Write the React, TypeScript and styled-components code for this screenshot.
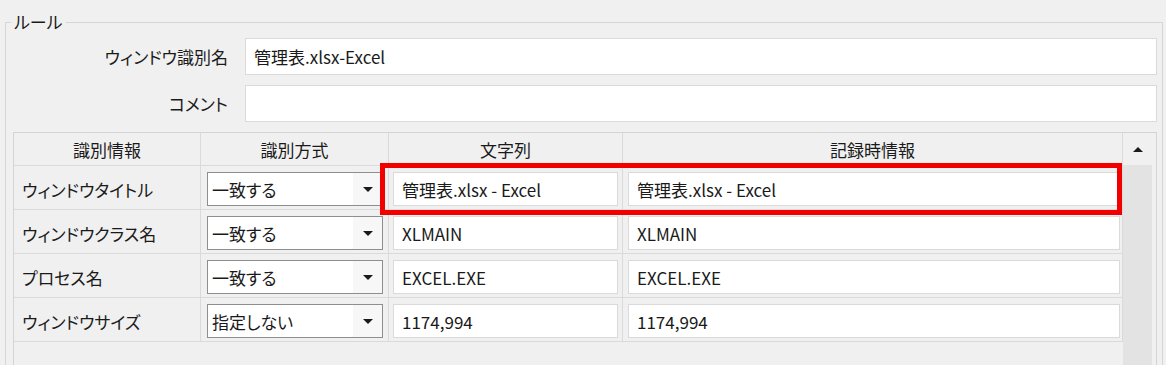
import React from "react";
import styled, { createGlobalStyle } from "styled-components";

const Global = createGlobalStyle`
  html, body { margin: 0; padding: 0; background: #f0f0f0; }
  body { font-family: "Noto Sans CJK JP", "Noto Sans", sans-serif; }
`;

const Window = styled.div`
  width: 1166px;
  height: 365px;
  overflow: hidden;
  box-sizing: border-box;
  padding-top: 22px;
  background: #f0f0f0;
  font-family: "Noto Sans CJK JP", "Noto Sans", sans-serif;
  font-size: 17px;
  font-feature-settings: "palt";
  color: #1a1a1a;
`;

const GroupBox = styled.section`
  position: relative;
  margin-left: 5px;
  width: 1158px;
  height: 420px;
  box-sizing: border-box;
  border: 1px solid #d6d6d6;
  border-bottom: none;
  padding: 15px 5px 0 7px;
`;

const Legend = styled.span`
  position: absolute;
  top: -13px;
  left: 5px;
  padding: 0 3px;
  line-height: 24px;
  background: #f0f0f0;
`;

const FormGrid = styled.div`
  display: grid;
  grid-template-columns: 215px 1fr;
  column-gap: 17px;
  row-gap: 10px;
  align-items: center;
`;

const FieldLabel = styled.label`
  text-align: right;
  white-space: nowrap;
`;

const TextBox = styled.div<{ $h?: number; $pad?: number }>`
  height: ${(p) => p.$h ?? 37}px;
  box-sizing: border-box;
  display: flex;
  align-items: center;
  padding: 0 ${(p) => p.$pad ?? 8}px;
  background: #ffffff;
  border: 1px solid #dadada;
  white-space: nowrap;
  overflow: hidden;
`;

const Table = styled.div`
  position: relative;
  margin-top: 10px;
  height: 260px;
  display: flex;
  border: 1px solid #d4d4d4;
  background: #f0f0f0;
`;

const Grid = styled.div`
  flex: 1;
  display: grid;
  grid-template-columns: 187px 188px 234px 1fr;
  align-content: start;
`;

const HeadCell = styled.div`
  height: 33px;
  box-sizing: border-box;
  display: flex;
  align-items: center;
  justify-content: center;
  border-right: 1px solid #dadada;
  border-bottom: 1px solid #dadada;
  white-space: nowrap;
`;

const Cell = styled.div<{ $pl: number; $pr: number }>`
  height: 44px;
  box-sizing: border-box;
  display: flex;
  align-items: center;
  padding: 3px ${(p) => p.$pr}px 0 ${(p) => p.$pl}px;
  border-right: 1px solid #dadada;
  border-bottom: 1px solid #dadada;
  white-space: nowrap;
  > * { flex: 1; }
`;

const Combo = styled.div`
  height: 34px;
  box-sizing: border-box;
  display: flex;
  align-items: center;
  background: #ffffff;
  border: 1px solid #8e8e8e;
  padding-left: 4px;
`;

const ComboText = styled.span`
  flex: 1;
`;

const ComboButton = styled.span`
  width: 29px;
  align-self: stretch;
  display: flex;
  align-items: center;
  justify-content: center;
  background: #f7f7f7;
`;

const DownArrow = styled.span`
  width: 0;
  height: 0;
  border-left: 5px solid transparent;
  border-right: 5px solid transparent;
  border-top: 5px solid #1a1a1a;
`;

const Scrollbar = styled.div`
  width: 33px;
  display: flex;
  flex-direction: column;
`;

const ScrollButton = styled.div`
  height: 32px;
  display: flex;
  align-items: center;
  justify-content: center;
  padding-right: 4px;
  background: #f0f0f0;
`;

const UpArrow = styled.span`
  width: 0;
  height: 0;
  border-left: 5px solid transparent;
  border-right: 5px solid transparent;
  border-bottom: 5px solid #1a1a1a;
`;

const ScrollTrack = styled.div`
  flex: 1;
  margin-right: 4px;
  background: #e3e3e3;
`;

const Highlight = styled.div`
  position: absolute;
  left: 366px;
  top: 30px;
  width: 742px;
  height: 52px;
  box-sizing: border-box;
  border: 5px solid #f20000;
  pointer-events: none;
`;

const rows = [
  { name: "ウィンドウタイトル", mode: "一致する", value: "管理表.xlsx - Excel", rec: "管理表.xlsx - Excel" },
  { name: "ウィンドウクラス名", mode: "一致する", value: "XLMAIN", rec: "XLMAIN" },
  { name: "プロセス名", mode: "一致する", value: "EXCEL.EXE", rec: "EXCEL.EXE" },
  { name: "ウィンドウサイズ", mode: "指定しない", value: "1174,994", rec: "1174,994" },
];

export default function App() {
  return (
    <>
      <Global />
      <Window>
        <GroupBox>
          <Legend>ルール</Legend>
          <FormGrid>
            <FieldLabel>ウィンドウ識別名</FieldLabel>
            <TextBox>管理表.xlsx-Excel</TextBox>
            <FieldLabel>コメント</FieldLabel>
            <TextBox />
          </FormGrid>
          <Table>
            <Grid>
              <HeadCell>識別情報</HeadCell>
              <HeadCell>識別方式</HeadCell>
              <HeadCell>文字列</HeadCell>
              <HeadCell>記録時情報</HeadCell>
              {rows.map((r) => (
                <React.Fragment key={r.name}>
                  <Cell $pl={8} $pr={4}>
                    <span>{r.name}</span>
                  </Cell>
                  <Cell $pl={6} $pr={5}>
                    <Combo>
                      <ComboText>{r.mode}</ComboText>
                      <ComboButton>
                        <DownArrow />
                      </ComboButton>
                    </Combo>
                  </Cell>
                  <Cell $pl={4} $pr={4}>
                    <TextBox $h={34}>{r.value}</TextBox>
                  </Cell>
                  <Cell $pl={5} $pr={2}>
                    <TextBox $h={34}>{r.rec}</TextBox>
                  </Cell>
                </React.Fragment>
              ))}
            </Grid>
            <Scrollbar>
              <ScrollButton>
                <UpArrow />
              </ScrollButton>
              <ScrollTrack />
            </Scrollbar>
            <Highlight />
          </Table>
        </GroupBox>
      </Window>
    </>
  );
}
